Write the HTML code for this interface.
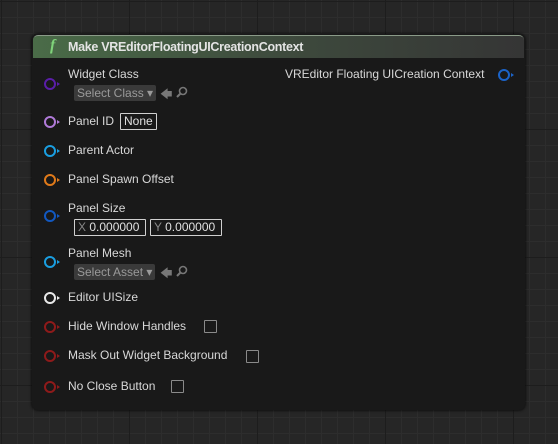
<!DOCTYPE html>
<html><head><style>
body{margin:0;width:558px;height:444px;overflow:hidden;background:#262626;
background-image:linear-gradient(#1d1d1d 1px,transparent 1px),linear-gradient(90deg,#1d1d1d 1px,transparent 1px),linear-gradient(#2d2d2d 1px,transparent 1px),linear-gradient(90deg,#2d2d2d 1px,transparent 1px);
background-size:128px 128px,128px 128px,16px 16px,16px 16px;background-position:1px 1px,1px 1px,1px 1px,1px 1px;
font-family:"Liberation Sans",sans-serif;position:relative}
.node{position:absolute;left:32px;top:34px;width:493px;height:376px;background:#191919;border-radius:6px;box-shadow:0 0 3px #000}
.hdr{position:absolute;left:1px;top:1px;right:1px;height:22px;border-radius:5px 5px 0 0;background:linear-gradient(90deg,#4a6c48 0%,#3f4d3e 45%,#353535 100%);border-top:1px solid #8a9a88}
.hdr span{position:absolute;left:35px;top:4px;color:#e4e4e4;font-size:12.5px;font-weight:bold;letter-spacing:-0.3px}
.hdr i{position:absolute;left:17px;top:1px;color:#7fd37a;font-family:"Liberation Serif",serif;font-size:16px;font-weight:bold}
.t{position:absolute;color:#d8d8d8;font-size:12px;white-space:nowrap}
.pin{position:absolute;width:8px;height:8px;border-radius:50%;border:2px solid}
.pin:after{content:"";position:absolute;left:11px;top:2px;border-left:3px solid;border-top:2px solid transparent;border-bottom:2px solid transparent;border-left-color:inherit}
.box{position:absolute;border:1px solid #d0d0d0;color:#e0e0e0;font-size:12px;height:15px;line-height:15px;padding:0 3px;border-radius:1px}
.sel{position:absolute;background:#3a3a3a;color:#9a9a9a;font-size:12px;height:16px;line-height:16px;padding:0 3px;border-radius:2px}
.cb{position:absolute;width:11px;height:11px;border:1.5px solid #8a8a8a;border-radius:1px}
.ic{position:absolute;color:#777;font-size:12px}
</style></head><body>
<div class="node">
<div class="hdr"><i>f</i><span>Make VREditorFloatingUICreationContext</span></div>
</div>
<div class="pin" style="left:44px;top:78px;border-color:#5a1ea8"></div>
<div class="t" style="left:68px;top:67px">Widget Class</div>
<div class="sel" style="left:74px;top:85px">Select Class ▾</div>
<div class="ic" style="left:160px;top:85px">🡄</div>
<svg style="position:absolute;left:176px;top:86px" width="12" height="12"><circle cx="7" cy="5" r="3.5" fill="none" stroke="#777" stroke-width="1.6"/><line x1="4.5" y1="7.5" x2="1" y2="11" stroke="#777" stroke-width="2"/></svg>
<div class="t" style="left:285px;top:67px">VREditor Floating UICreation Context</div>
<div class="pin" style="left:498px;top:69px;border-color:#1b63c8"></div>

<div class="pin" style="left:44px;top:116px;border-color:#b07ad8"></div>
<div class="t" style="left:68px;top:114px">Panel ID</div>
<div class="box" style="left:120px;top:113px">None</div>

<div class="pin" style="left:44px;top:145px;border-color:#1a9ee0"></div>
<div class="t" style="left:68px;top:143px">Parent Actor</div>
<div class="pin" style="left:44px;top:174px;border-color:#e07a1a"></div>
<div class="t" style="left:68px;top:172px">Panel Spawn Offset</div>

<div class="pin" style="left:44px;top:210px;border-color:#1258c0"></div>
<div class="t" style="left:68px;top:201px">Panel Size</div>
<div class="box" style="left:74px;top:219px;width:64px"><span style="color:#888">X</span> 0.000000</div>
<div class="box" style="left:150px;top:219px;width:64px"><span style="color:#888">Y</span> 0.000000</div>

<div class="pin" style="left:44px;top:256px;border-color:#1a9ee0"></div>
<div class="t" style="left:68px;top:246px">Panel Mesh</div>
<div class="sel" style="left:74px;top:264px">Select Asset ▾</div>
<div class="ic" style="left:160px;top:264px">🡄</div>
<svg style="position:absolute;left:176px;top:265px" width="12" height="12"><circle cx="7" cy="5" r="3.5" fill="none" stroke="#777" stroke-width="1.6"/><line x1="4.5" y1="7.5" x2="1" y2="11" stroke="#777" stroke-width="2"/></svg>

<div class="pin" style="left:44px;top:292px;border-color:#e8e8e8"></div>
<div class="t" style="left:68px;top:290px">Editor UISize</div>
<div class="pin" style="left:44px;top:321px;border-color:#8e1a1a"></div>
<div class="t" style="left:68px;top:319px">Hide Window Handles</div>
<div class="cb" style="left:204px;top:320px"></div>
<div class="pin" style="left:44px;top:350px;border-color:#8e1a1a"></div>
<div class="t" style="left:68px;top:348px">Mask Out Widget Background</div>
<div class="cb" style="left:246px;top:350px"></div>
<div class="pin" style="left:44px;top:381px;border-color:#8e1a1a"></div>
<div class="t" style="left:68px;top:379px">No Close Button</div>
<div class="cb" style="left:171px;top:380px"></div>
</body></html>
